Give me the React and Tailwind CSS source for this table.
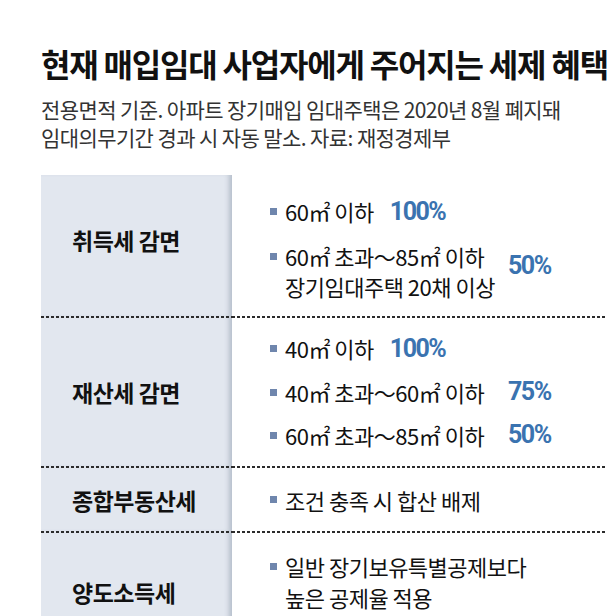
import React from "react";

const dash =
  "h-[2px] w-full bg-[linear-gradient(to_right,#2b2b2b_3px,transparent_3px)] bg-[length:5px_2px] bg-repeat-x";

function Bullet({ className = "" }) {
  return <span className={`block w-[7px] h-[7px] bg-[#6f86ad] mr-[8px] shrink-0 ${className}`} />;
}

function Pct({ children }) {
  return (
    <span className="font-['Roboto',sans-serif] font-bold text-[25px] tracking-[-1.5px] text-[#3a73b0]">
      {children}
    </span>
  );
}

function Row({ label, top, labelClass = "items-center", rightClass, children, height }) {
  return (
    <div className={`flex ${height}`}>
      <div className="w-[191px] shrink-0 flex flex-col bg-[#e2e7ef] shadow-[inset_-6px_0_5px_-3px_rgba(70,85,110,0.28)]">
        {top && <div className={dash} />}
        <div className={`flex-1 flex pl-[31px] ${labelClass}`}>
          <span className="text-[23px] font-bold tracking-[-0.5px] leading-[30px] text-[#111]">{label}</span>
        </div>
      </div>
      <div className="flex-1 flex flex-col">
        {top && <div className={dash} />}
        <div className={`flex-1 flex flex-col pl-[38px] ${rightClass}`}>{children}</div>
      </div>
    </div>
  );
}

export default function App() {
  return (
    <div className="w-[610px] h-[616px] overflow-hidden bg-white font-['Noto_Sans_CJK_KR','Noto_Sans',sans-serif] text-[#111] pl-[41px] pr-[4px] pt-[43px]">
      {/* title */}
      <h1 className="text-[32px] leading-[40px] font-bold tracking-[-1.2px] whitespace-nowrap">
        현재 매입임대 사업자에게 주어지는 세제 혜택
      </h1>
      <p className="mt-[12px] text-[21px] leading-[28px] tracking-[-0.6px] text-[#333] whitespace-nowrap">
        전용면적 기준. 아파트 장기매입 임대주택은 2020년 8월 폐지돼
        <br />
        임대의무기간 경과 시 자동 말소. 자료: 재정경제부
      </p>

      {/* table */}
      <div className="mt-[24px] text-[22px] tracking-[-0.5px]">
        <Row label="취득세 감면" height="h-[141px]" labelClass="items-center pb-[11px]" rightClass="pt-[20px]">
          <div className="flex items-center leading-[30px]">
            <Bullet />
            <span>60㎡ 이하</span>
            <span className="ml-[16px]"><Pct>100%</Pct></span>
          </div>
          <div className="flex items-start mt-[14px]">
            <Bullet className="mt-[12px]" />
            <div className="w-[223px] leading-[30px]">
              <div>60㎡ 초과～85㎡ 이하</div>
              <div>장기임대주택 20채 이상</div>
            </div>
            <span className="pt-[6px]"><Pct>50%</Pct></span>
          </div>
        </Row>

        <Row label="재산세 감면" top height="h-[150px]" rightClass="pt-[14px] gap-[13px]">
          <div className="flex items-center leading-[30px]">
            <Bullet />
            <span>40㎡ 이하</span>
            <span className="ml-[16px]"><Pct>100%</Pct></span>
          </div>
          <div className="flex items-center leading-[30px]">
            <Bullet />
            <span className="w-[223px]">40㎡ 초과～60㎡ 이하</span>
            <Pct>75%</Pct>
          </div>
          <div className="flex items-center leading-[30px]">
            <Bullet />
            <span className="w-[223px]">60㎡ 초과～85㎡ 이하</span>
            <Pct>50%</Pct>
          </div>
        </Row>

        <Row label="종합부동산세" top height="h-[65px]" rightClass="justify-center">
          <div className="flex items-center leading-[30px]">
            <Bullet />
            <span>조건 충족 시 합산 배제</span>
          </div>
        </Row>

        <Row label="양도소득세" top height="h-[120px]" labelClass="items-start pt-[44px]" rightClass="pt-[18px]">
          <div className="flex items-start leading-[31px]">
            <Bullet className="mt-[12px]" />
            <div>
              <div>일반 장기보유특별공제보다</div>
              <div>높은 공제율 적용</div>
            </div>
          </div>
        </Row>
      </div>
    </div>
  );
}
